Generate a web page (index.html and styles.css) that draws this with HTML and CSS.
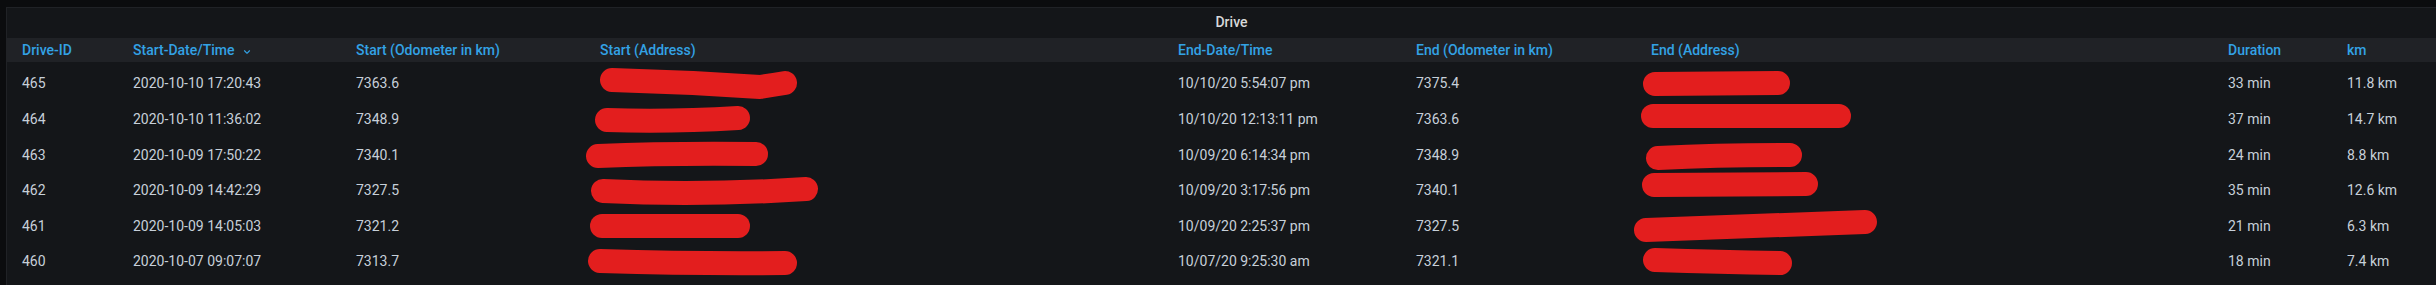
FILE: index.html
```html
<!DOCTYPE html>
<html lang="en">
<head>
<meta charset="utf-8">
<title>Drive</title>
<link rel="stylesheet" href="styles.css">
</head>
<body>
<section class="panel">
  <header class="panel-title">Drive</header>
  <div class="table">
    <div class="row head">
      <div class="cell">Drive-ID</div>
      <div class="cell sorted">Start-Date/Time
        <svg class="chev" viewBox="0 0 24 24" width="14" height="14"><path d="M17,9.17a1,1,0,0,0-1.41,0L12,12.71,8.46,9.17a1,1,0,0,0-1.41,0,1,1,0,0,0,0,1.42l4.24,4.24a1,1,0,0,0,1.42,0L17,10.59A1,1,0,0,0,17,9.17Z"/></svg>
      </div>
      <div class="cell">Start (Odometer in km)</div>
      <div class="cell">Start (Address)</div>
      <div class="cell">End-Date/Time</div>
      <div class="cell">End (Odometer in km)</div>
      <div class="cell">End (Address)</div>
      <div class="cell">Duration</div>
      <div class="cell">km</div>
    </div>
    <div class="rows">
      <div class="row">
        <div class="cell">465</div>
        <div class="cell">2020-10-10 17:20:43</div>
        <div class="cell">7363.6</div>
        <div class="cell"><svg class="redact" viewBox="0 0 220 36"><path d="M12,15 L93,18 L160,22 Q172,20 185,18"/></svg></div>
        <div class="cell">10/10/20 5:54:07 pm</div>
        <div class="cell">7375.4</div>
        <div class="cell"><svg class="redact" viewBox="0 0 220 36"><path d="M4,19 L127,18"/></svg></div>
        <div class="cell">33 min</div>
        <div class="cell">11.8 km</div>
      </div>
      <div class="row">
        <div class="cell">464</div>
        <div class="cell">2020-10-10 11:36:02</div>
        <div class="cell">7348.9</div>
        <div class="cell"><svg class="redact" viewBox="0 0 220 36"><path d="M7,19 Q70,21 138,17"/></svg></div>
        <div class="cell">10/10/20 12:13:11 pm</div>
        <div class="cell">7363.6</div>
        <div class="cell"><svg class="redact" viewBox="0 0 220 36"><path d="M2,15 L188,15"/></svg></div>
        <div class="cell">37 min</div>
        <div class="cell">14.7 km</div>
      </div>
      <div class="row">
        <div class="cell">463</div>
        <div class="cell">2020-10-09 17:50:22</div>
        <div class="cell">7340.1</div>
        <div class="cell"><svg class="redact" viewBox="0 0 220 36"><path d="M-2,19 Q70,16 156,17"/></svg></div>
        <div class="cell">10/09/20 6:14:34 pm</div>
        <div class="cell">7348.9</div>
        <div class="cell"><svg class="redact" viewBox="0 0 220 36"><path d="M7,21 Q69,18 139,18"/></svg></div>
        <div class="cell">24 min</div>
        <div class="cell">8.8 km</div>
      </div>
      <div class="row">
        <div class="cell">462</div>
        <div class="cell">2020-10-09 14:42:29</div>
        <div class="cell">7327.5</div>
        <div class="cell"><svg class="redact" viewBox="0 0 220 36"><path d="M3,19 Q100,24 206,17"/></svg></div>
        <div class="cell">10/09/20 3:17:56 pm</div>
        <div class="cell">7340.1</div>
        <div class="cell"><svg class="redact" viewBox="0 0 220 36"><path d="M3,13 L155,12"/></svg></div>
        <div class="cell">35 min</div>
        <div class="cell">12.6 km</div>
      </div>
      <div class="row">
        <div class="cell">461</div>
        <div class="cell">2020-10-09 14:05:03</div>
        <div class="cell">7321.2</div>
        <div class="cell"><svg class="redact" viewBox="0 0 220 36"><path d="M2,18 L138,18"/></svg></div>
        <div class="cell">10/09/20 2:25:37 pm</div>
        <div class="cell">7327.5</div>
        <div class="cell"><svg class="redact" viewBox="0 0 220 36"><path d="M-5,22 Q109,18 214,14"/></svg></div>
        <div class="cell">21 min</div>
        <div class="cell">6.3 km</div>
      </div>
      <div class="row">
        <div class="cell">460</div>
        <div class="cell">2020-10-07 09:07:07</div>
        <div class="cell">7313.7</div>
        <div class="cell"><svg class="redact" viewBox="0 0 220 36"><path d="M0,18 Q100,21 185,20"/></svg></div>
        <div class="cell">10/07/20 9:25:30 am</div>
        <div class="cell">7321.1</div>
        <div class="cell"><svg class="redact" viewBox="0 0 220 36"><path d="M4,17 Q69,19 129,20"/></svg></div>
        <div class="cell">18 min</div>
        <div class="cell">7.4 km</div>
      </div>
    </div>
  </div>
</section>
</body>
</html>
```
FILE: styles.css
```css
html, body {
  margin: 0;
  padding: 0;
}
body {
  background: #0b0c0e;
  width: 2436px;
  height: 285px;
  overflow: hidden;
  font-family: Roboto, "Liberation Sans", sans-serif;
  font-size: 14px;
  color: #c7d0d9;
}
.panel {
  margin: 7px 0 0 6px;
  height: 278px;
  background: #141619;
  border-top: 1px solid #202226;
  border-left: 1px solid #202226;
  box-sizing: border-box;
}
.panel-title {
  height: 30px;
  line-height: 28px;
  padding-left: 20px;
  text-align: center;
  font-weight: 500;
  color: #d8d9da;
}
.row {
  display: grid;
  grid-template-columns: 111px 223px 244px 578px 238px 235px 577px 119px 1fr;
  padding-left: 15px;
  height: 35.6px;
  align-items: center;
  white-space: nowrap;
}
.row.head {
  height: 24px;
  background: #202226;
  color: #33a2e5;
  font-weight: 500;
}
.rows {
  padding-top: 3.4px;
}
.cell {
  line-height: 20px;
}
.sorted {
  display: flex;
  align-items: center;
}
.chev {
  fill: #33a2e5;
  margin-left: 5.5px;
  margin-top: 4px;
}
.redact {
  display: block;
  width: 220px;
  height: 36px;
  overflow: visible;
}
.redact path {
  fill: none;
  stroke: #e31e1e;
  stroke-width: 24;
  stroke-linecap: round;
  stroke-linejoin: round;
}
```
